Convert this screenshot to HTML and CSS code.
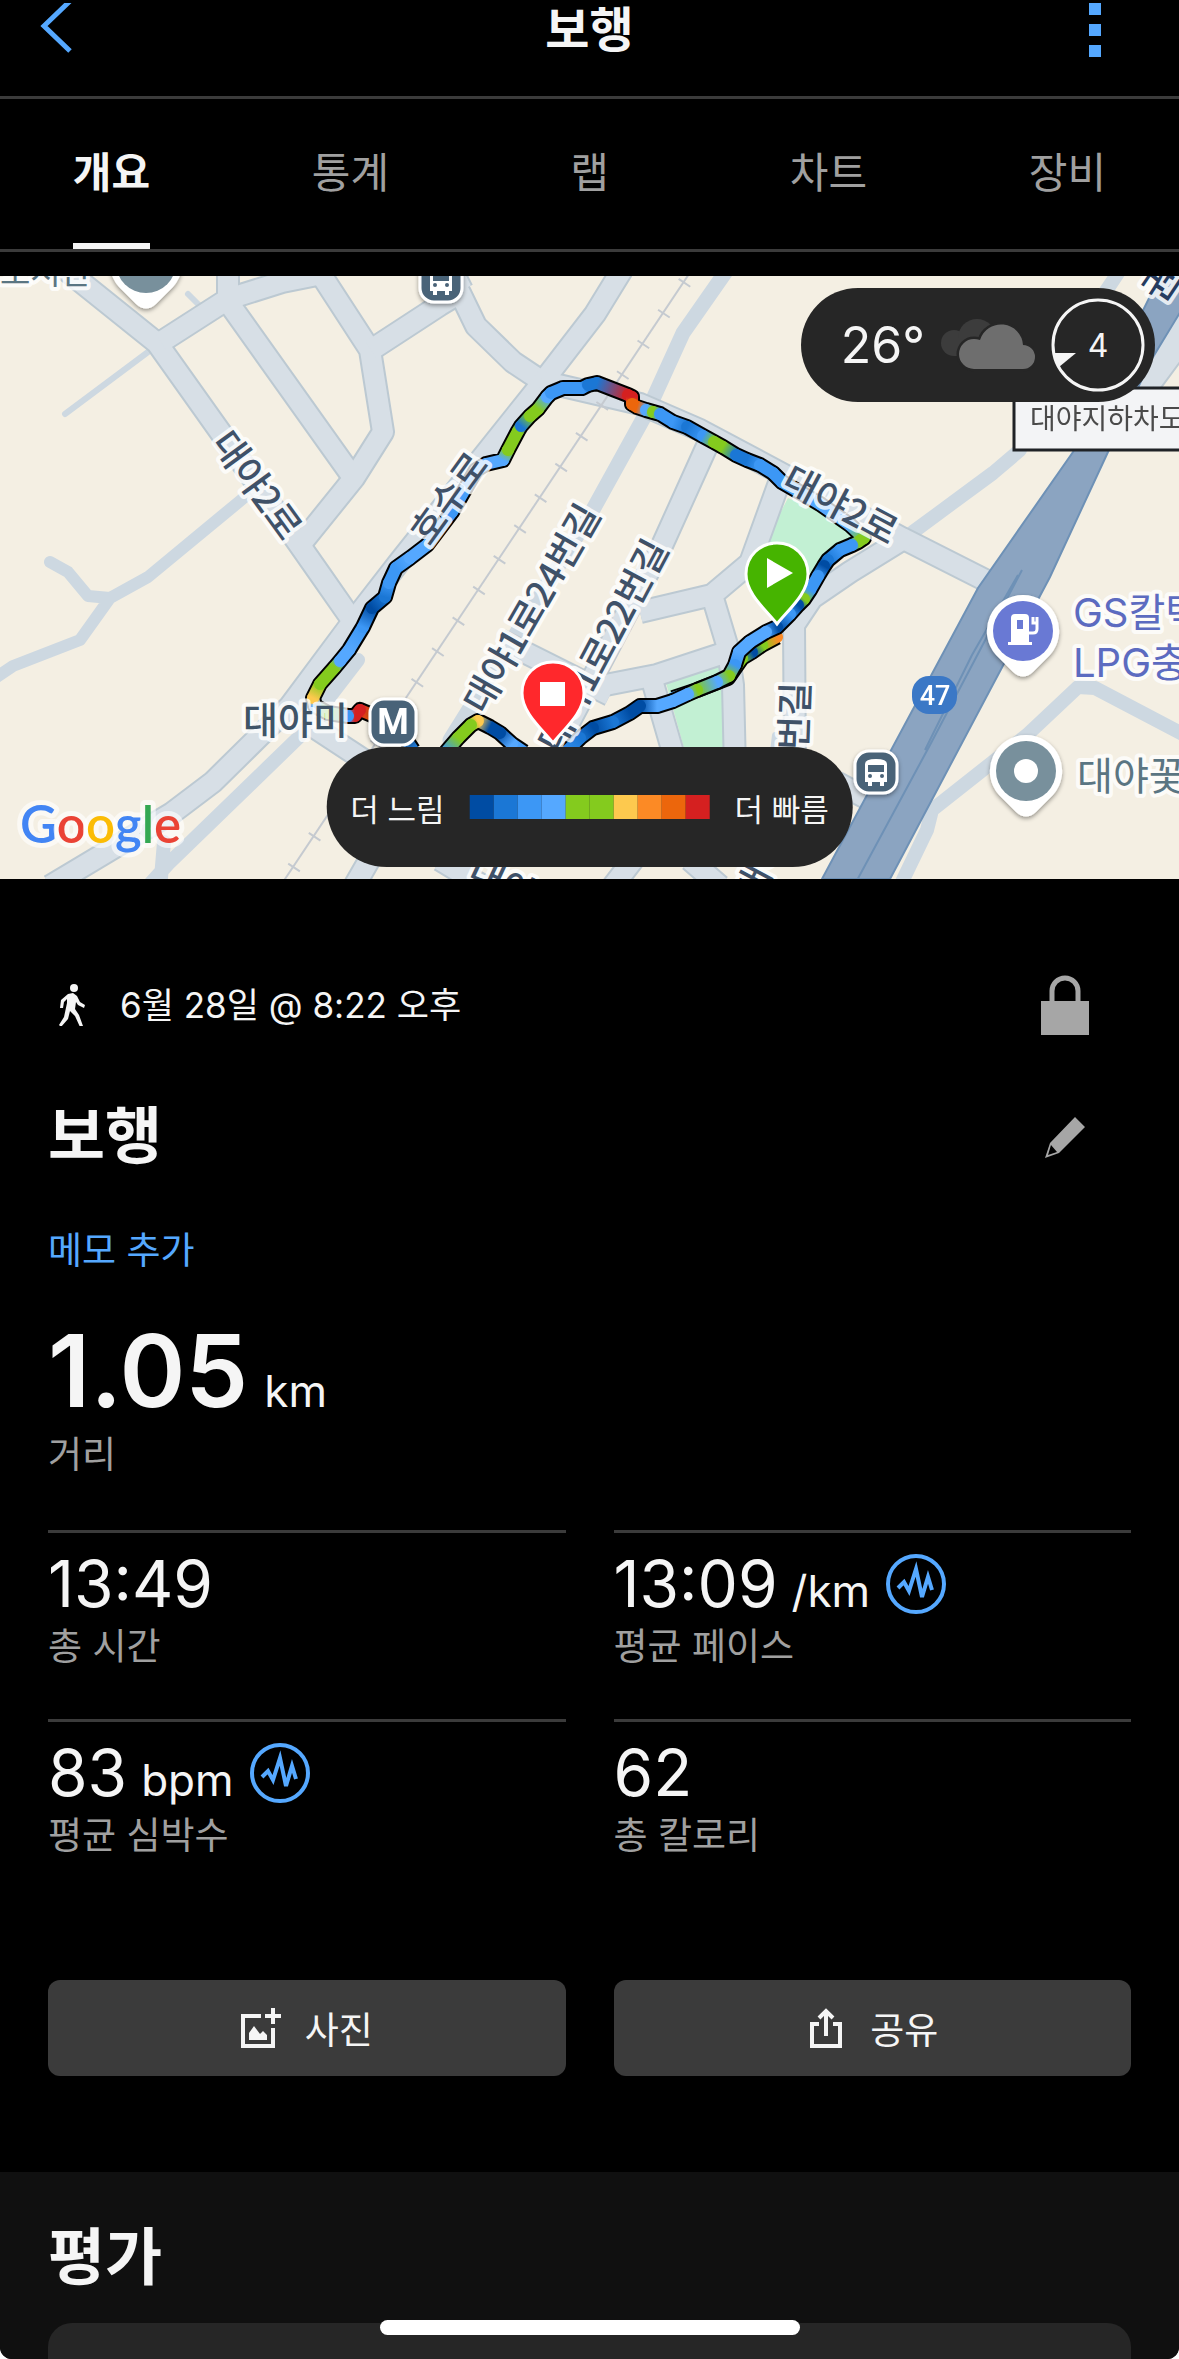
FILE: index.html
```html
<!DOCTYPE html>
<html lang="ko">
<head>
    <meta charset="UTF-8">
    <meta name="viewport" content="width=device-width, initial-scale=1.0">
    <title>보행</title>
    <link rel="stylesheet" href="styles.css">
</head>
<body>
    <div id="app">
        <header class="top-bar">
            <button class="icon-button" type="button" aria-label="뒤로">
                <svg width="40" height="54" viewBox="0 0 40 54"><path d="M34 -2L8 23L34 48" fill="none" stroke="#55a8ff" stroke-width="5"/></svg>
            </button>
            <h1>보행</h1>
            <button class="icon-button" type="button" aria-label="더 보기">
                <svg width="12" height="54" viewBox="0 0 12 54"><path d="M0 0h12v12H0zM0 21h12v12H0zM0 42h12v12H0z" fill="#55a8ff"/></svg>
            </button>
        </header>

        <nav class="tabs">
            <button class="tab active" type="button"><span>개요</span></button>
            <button class="tab" type="button"><span>통계</span></button>
            <button class="tab" type="button"><span>랩</span></button>
            <button class="tab" type="button"><span>차트</span></button>
            <button class="tab" type="button"><span>장비</span></button>
        </nav>

        <section class="map">
            <svg class="map-canvas" viewBox="0 276 1179 603" role="img" aria-label="지도">
                <defs>
                    <filter id="shadow" x="-20%" y="-20%" width="140%" height="150%">
                        <feDropShadow dx="0" dy="2" stdDeviation="2" flood-opacity="0.4"/>
                    </filter>
                    <g id="bus">
                        <rect x="-21" y="-21" width="42" height="42" rx="14" fill="#4a6378" stroke="#fff" stroke-width="3"/>
                        <path d="M-11 -8q0 -5 11 -5t11 5v18h-3v4h-4v-4h-8v4h-4v-4h-3z" fill="#fff"/>
                        <path d="M-8 -7h16v7h-16z" fill="#4a6378"/>
                        <circle cx="-6" cy="4" r="2" fill="#4a6378"/>
                        <circle cx="6" cy="4" r="2" fill="#4a6378"/>
                    </g>
                    <path id="poi" d="M0 -36a36 36 0 0 1 27 60L10 41q-10 9 -20 0L-27 24A36 36 0 0 1 0 -36z" fill="#fff"/>
                    <path id="marker" d="M0 -30c17 0 31 13 31 31C31 21 11 37 0 51C-11 37 -31 21 -31 1C-31 -17 -17 -30 0 -30z" stroke="#fff" stroke-width="3"/>
                    <g id="streets">
                        <path d="M66 270L157 343L221 433L322 577L352 620"/>
                        <path d="M228 268V299L161 342M228 299L282 282L322 274M228 302L352 476"/>
                        <path d="M318 270L370 350L383 432L354 478L300 545"/>
                        <path d="M371 350L440 305L460 293L476 326L513 362L540 380"/>
                        <path d="M462 290L452 270M622 270L595 314L541 384L482 458L400 561L348 628L290 706L213 782L172 813L50 886"/>
                        <path d="M541 381L640 404L700 430L790 478L902 538L985 580"/>
                        <path d="M707 446L660 550L560 740M780 480L750 563L712 595L640 612M712 595L727 645L733 685L735 770"/>
                        <path d="M590 688L657 675L727 652M652 680L678 770M500 640L610 695M905 538L850 572L812 598L794 625L795 770"/>
                        <path d="M312 726L370 764M836 782L866 798M440 860L490 890M610 890L636 856M375 850L352 890M690 860L720 886"/>
                        <path d="M1190 330L1150 384M1190 300L1140 390"/>
                    </g>
                </defs>

                <rect y="276" width="1179" height="603" fill="#f4efe3"/>

                <!-- parks -->
                <path d="M788 498L766 540L775 590L812 572L835 550L865 532z" fill="#c2f0d3"/>
                <path d="M666 683L722 665L726 770L690 770z" fill="#c2f0d3"/>

                <!-- paths -->
                <g class="path">
                    <path d="M65 414L148 352M188 294L204 310" stroke-width="6"/>
                    <path d="M50 562L68 572L88 596L110 598L148 577L246 496M110 598L80 640L13 666L-8 680" stroke-width="12"/>
                    <path d="M358 660L298 738L168 864L150 884M164 842L160 890" stroke-width="14"/>
                    <path d="M727 270L683 333L648 410L590 515L450 740" stroke-width="15"/>
                    <path d="M1020 450L993 473L913 532M1120 270L1100 300" stroke-width="14"/>
                    <path d="M1190 738L1095 688L1078 687L1027 735L932 810L927 830L900 886" stroke-width="14"/>
                    <path d="M775 735L772 760" stroke-width="6"/>
                </g>

                <!-- streets, drawn twice so the outline stays behind every junction -->
                <use href="#streets" class="street-line"/>
                <use href="#streets" class="street-fill"/>

                <!-- railway -->
                <path d="M689 274L283 882" stroke="#c5cad0" stroke-width="2"/>
                <path d="M685 282L283 884" stroke="#c5cad0" stroke-width="14" stroke-dasharray="2 35"/>

                <!-- highway -->
                <path d="M1160 276H1190V296L1150 362L1108 452L1050 577L990 690L890 879H822L978 588L1073 452z" fill="#8ba4c1" stroke="#6e91b6" stroke-width="2"/>
                <path d="M1022 570L980 650L930 745L855 884M1018 575L972 655L925 750" fill="none" stroke="#6e91b6" stroke-width="2"/>

                <g id="route"></g>

                <g class="road-name">
                    <text transform="translate(256 486) rotate(54)" y="12">대야2로</text>
                    <text transform="translate(840 506) rotate(28)" y="12">대야2로</text>
                    <text transform="translate(450 499) rotate(-54)" y="12">호수로</text>
                    <text transform="translate(533 609) rotate(-60)" y="12">대야1로24번길</text>
                    <text transform="translate(604 646) rotate(-62)" y="12">대야1로22번길</text>
                    <text transform="translate(796 716) rotate(-88)" y="12">번길</text>
                    <text transform="translate(762 868) rotate(-62)" y="12">대야</text>
                    <text transform="translate(502 884) rotate(25)" y="12">대야</text>
                    <text transform="translate(1162 284) rotate(-56)" y="12" class="navy">권</text>
                </g>

                <g class="place-name">
                    <text x="0" y="284" font-size="33" fill="#5a7582">도서관</text>
                    <text x="243" y="734" font-size="38" fill="#3f5468" class="strong">대야미</text>
                    <text x="1073" y="627" font-size="40" fill="#5c6bc0">GS칼텍스</text>
                    <text x="1073" y="677" font-size="40" fill="#5c6bc0">LPG충전소</text>
                    <text x="1077" y="790" font-size="39" fill="#5a7582">대야꽃</text>
                </g>

                <g filter="url(#shadow)">
                    <use href="#poi" x="146" y="263"/>
                    <use href="#poi" x="1023" y="631"/>
                    <use href="#poi" x="1026" y="771"/>
                    <use href="#bus" x="441" y="281"/>
                    <use href="#bus" x="876" y="772"/>
                    <rect x="370" y="699" width="46" height="46" rx="14" fill="#4a6378" stroke="#fff" stroke-width="3"/>
                </g>
                <circle cx="146" cy="263" r="30" fill="#78909c"/>
                <circle cx="1023" cy="631" r="30" fill="#6979d4"/>
                <circle cx="1026" cy="771" r="30" fill="#78909c"/>
                <circle cx="1026" cy="771" r="12" fill="#fff"/>
                <path d="M1011 642V618q0 -4 4 -4h10q4 0 4 4v24h3v3h-24v-3zM1017 620v9h6v-9z" fill="#fff" fill-rule="evenodd"/>
                <path d="M1029 633h4q4 0 4 -4v-12M1033 617v6h4" fill="none" stroke="#fff" stroke-width="3"/>
                <text x="393" y="734" class="metro">M</text>

                <rect x="912" y="676" width="45" height="38" rx="17" fill="#3b78c6"/>
                <text x="935" y="705" class="shield">47</text>

                <use href="#marker" x="777" y="573" fill="#46b400"/>
                <path d="M767 558V588L793 573z" fill="#fff"/>
                <use href="#marker" x="553" y="692" fill="#ff282c"/>
                <path d="M540 682h25v24h-25z" fill="#fff"/>

                <rect x="1014" y="388" width="200" height="62" fill="#f3f4f6" stroke="#1f2226" stroke-width="3"/>
                <text x="1030" y="429" class="box-name">대야지하차도</text>

                <text x="20" y="843" class="google"><tspan fill="#4285f4">G</tspan><tspan fill="#ea4335">o</tspan><tspan fill="#fbbc05">o</tspan><tspan fill="#4285f4">g</tspan><tspan fill="#34a853">l</tspan><tspan fill="#ea4335">e</tspan></text>
            </svg>

            <div class="weather">
                <span>26°</span>
                <svg width="94" height="54" viewBox="0 0 94 54">
                    <g fill="#3c3c3c">
                        <circle cx="13" cy="25" r="13"/>
                        <circle cx="36" cy="20" r="19"/>
                        <path d="M13 20h30v18H13z"/>
                    </g>
                    <path d="M33 51a15 15 0 0 1 0 -30q3 0 6 1a22 22 0 0 1 43 5a12 12 0 0 1 0 24z" fill="#6e6e6e" stroke="#262626" stroke-width="5" paint-order="stroke"/>
                </svg>
                <div class="wind">
                    <svg width="94" height="94" viewBox="0 0 94 94">
                        <circle cx="47" cy="47" r="45" fill="none" stroke="#f5f5f5" stroke-width="3"/>
                        <path d="M2 55H25L8 69z" fill="#f5f5f5"/>
                    </svg>
                    <span>4</span>
                </div>
            </div>

            <div class="legend">
                <span>더 느림</span>
                <div class="legend-bar">
                    <i class="c1"></i><i class="c2"></i><i class="c3"></i><i class="c4"></i><i class="c5"></i><i class="c5"></i><i class="c6"></i><i class="c7"></i><i class="c8"></i><i class="c9"></i>
                </div>
                <span>더 빠름</span>
            </div>
        </section>

        <main class="details">
            <div class="row">
                <p class="date">
                    <svg width="48" height="42" viewBox="0 0 48 42">
                        <circle cx="26" cy="4" r="4" fill="#f5f5f5"/>
                        <path d="M20 10l5 -1l4 3l3 6l5 3l-1 3l-6 -3l-2 -3l-1 7l4 6l4 11l-3 1l-5 -11l-5 -5l-2 8l-7 8l-2 -2l5 -8l3 -14v-4l-3 3l-1 6h-3l1 -8z" fill="#f5f5f5"/>
                    </svg>
                    6월 28일 @ 8:22 오후
                </p>
                <button class="icon-button" type="button" aria-label="비공개">
                    <svg width="48" height="60" viewBox="0 0 48 60">
                        <path d="M0 26h48v34H0z" fill="#a6a6a6"/>
                        <path d="M11 28V16a13 13 0 0 1 26 0V28" fill="none" stroke="#a6a6a6" stroke-width="5"/>
                    </svg>
                </button>
            </div>
            <div class="row title-row">
                <h2>보행</h2>
                <button class="icon-button" type="button" aria-label="편집">
                    <svg width="48" height="48" viewBox="0 0 48 48">
                        <path d="M34 4L44 14L18 40L4 45L9 30zM10 32L7 42L16 39z" fill="#a6a6a6" fill-rule="evenodd"/>
                    </svg>
                </button>
            </div>
            <a class="note" href="#">메모 추가</a>

            <div class="distance"><strong>1.05</strong> <span>km</span></div>
            <div class="label">거리</div>

            <div class="stats">
                <div class="stat">
                    <div class="value">13:49</div>
                    <div class="label">총 시간</div>
                </div>
                <div class="stat">
                    <div class="value">13:09 <span>/km</span>
                        <svg width="60" height="60" viewBox="0 0 60 60" class="wave"><circle cx="30" cy="30" r="28"/><path d="M12 34L18 28L23 37L30 15L36 43L42 23L46 36"/></svg>
                    </div>
                    <div class="label">평균 페이스</div>
                </div>
                <div class="stat">
                    <div class="value">83 <span>bpm</span>
                        <svg width="60" height="60" viewBox="0 0 60 60" class="wave"><circle cx="30" cy="30" r="28"/><path d="M12 34L18 28L23 37L30 15L36 43L42 23L46 36"/></svg>
                    </div>
                    <div class="label">평균 심박수</div>
                </div>
                <div class="stat">
                    <div class="value">62</div>
                    <div class="label">총 칼로리</div>
                </div>
            </div>

            <div class="actions">
                <button type="button">
                    <svg width="40" height="40" viewBox="0 0 40 40" fill="#f5f5f5">
                        <path d="M0 6H20V10H4V36H30V20H34V40H0z"/>
                        <path d="M30 0h4v6h6v4h-6v6h-4v-6h-6v-4h6zM8 32V25l5 -7l6 8l3 -3l4 4v5z"/>
                    </svg>
                    사진
                </button>
                <button type="button">
                    <svg width="40" height="40" viewBox="0 0 40 40">
                        <path d="M13 16H6V38H34V16H27M20 28V3M13 10L20 3L27 10" fill="none" stroke="#f5f5f5" stroke-width="4"/>
                    </svg>
                    공유
                </button>
            </div>
        </main>

        <section class="rating">
            <h2>평가</h2>
            <div class="card"></div>
        </section>
        <div class="home-bar"></div>
    </div>

    <script>
        const colors = ['#004ca3', '#1b77d5', '#3c97f5', '#55a8ff', '#84cb1e', '#fdc94e', '#fc8a25', '#ec660c', '#d52020'];

        // x, y, colour index
        const tracks = [
            [
                [777, 637, 6], [762, 645, 4], [752, 652, 0], [742, 658, 4], [728, 678, 4], [697, 690, 4], [673, 698, 3]
            ],
            [
                [413, 750, 1], [403, 735, 2], [390, 722, 6], [372, 715, 7], [360, 710, 8], [355, 716, 8], [348, 716, 2],
                [328, 713, 4], [315, 706, 3], [313, 698, 5], [320, 684, 4], [335, 667, 4], [340, 661, 3], [349, 650, 3],
                [363, 627, 2], [372, 608, 0], [385, 597, 1], [389, 583, 2], [396, 568, 2], [410, 558, 3], [427, 545, 3],
                [452, 512, 2], [476, 470, 3], [486, 464, 3], [503, 460, 3], [508, 450, 4], [518, 431, 4], [521, 426, 1],
                [530, 416, 4], [538, 409, 4], [547, 397, 3], [551, 393, 2], [563, 388, 2], [582, 388, 2], [588, 385, 1],
                [597, 383, 1], [628, 395, 8], [632, 397, 8], [632, 404, 7], [637, 407, 7], [646, 410, 3], [653, 412, 4],
                [660, 414, 2], [673, 422, 2], [687, 427, 1], [703, 436, 2], [714, 442, 4], [723, 447, 4], [736, 455, 1],
                [747, 460, 1], [760, 465, 2], [773, 473, 2], [782, 482, 2], [820, 504, 3], [850, 525, 3],
                [864, 538, 4], [858, 542, 4], [852, 545, 2], [840, 550, 2], [828, 560, 1], [824, 566, 0], [818, 576, 2],
                [810, 590, 2], [804, 599, 4], [798, 605, 0], [790, 614, 2], [777, 627, 0], [766, 632, 3], [750, 642, 3],
                [739, 652, 3], [735, 665, 2], [729, 676, 4], [717, 682, 3], [697, 690, 4], [688, 694, 3], [673, 701, 3],
                [657, 706, 3], [640, 706, 0], [630, 713, 0], [613, 722, 1], [593, 728, 0], [580, 738, 1], [560, 758, 2]
            ],
            [
                [524, 752, 2], [512, 744, 3], [500, 733, 0], [490, 727, 0], [478, 721, 5], [471, 725, 4], [458, 738, 4], [446, 752, 2]
            ]
        ];

        const ns = 'http://www.w3.org/2000/svg';
        const route = document.getElementById('route');

        function add(name, attrs, parent) {
            const el = document.createElementNS(ns, name);
            for (const key in attrs) el.setAttribute(key, attrs[key]);
            parent.appendChild(el);
            return el;
        }

        tracks.forEach((track, t) => {
            add('polyline', { points: track.map(p => p[0] + ',' + p[1]).join(' '), class: 'casing' }, route);
            for (let i = 1; i < track.length; i++) {
                const [x1, y1, c1] = track[i - 1];
                const [x2, y2, c2] = track[i];
                const id = 'g' + t + '-' + i;
                const gradient = add('linearGradient', { id, gradientUnits: 'userSpaceOnUse', x1, y1, x2, y2 }, route);
                add('stop', { offset: 0, 'stop-color': colors[c1] }, gradient);
                add('stop', { offset: 1, 'stop-color': colors[c2] }, gradient);
                add('path', { d: `M${x1} ${y1}L${x2} ${y2}`, class: 'pace', stroke: `url(#${id})` }, route);
            }
        });
    </script>
</body>
</html>
```
FILE: styles.css
```css
* {
    box-sizing: border-box;
}

body {
    margin: 0;
    background: #fff;
    color: #f5f5f5;
    font-family: Inter, "Noto Sans CJK KR", sans-serif;
    font-size: 37px;
}

h1, h2, p {
    margin: 0;
}

button {
    padding: 0;
    border: none;
    background: none;
    color: inherit;
    font: inherit;
    cursor: pointer;
}

svg {
    display: block;
    flex-shrink: 0;
}

#app {
    position: relative;
    display: flex;
    flex-direction: column;
    min-height: 100vh;
    background: #000;
    border-radius: 0 0 12px 12px;
    overflow: hidden;
}

.top-bar {
    display: grid;
    grid-template-columns: 1fr auto 1fr;
    align-items: center;
    padding: 0 78px 36px 36px;
    border-bottom: 3px solid #3b3b3b;
}

.top-bar h1 {
    padding-left: 42px;
    font-size: 48px;
    font-weight: 600;
    line-height: 60px;
}

.top-bar .icon-button:last-child {
    justify-self: end;
}

.tabs {
    display: grid;
    grid-template-columns: repeat(5, 1fr);
    margin: 0 -8px;
    border-bottom: 3px solid #3b3b3b;
}

.tab {
    color: #a0a0a0;
    font-size: 42px;
    line-height: 140px;
}

.tab span {
    display: inline-block;
    padding-top: 4px;
    border-bottom: 6px solid transparent;
}

.tab.active {
    color: #f5f5f5;
    font-weight: 600;
}

.tab.active span {
    border-color: #f5f5f5;
}

.map {
    position: relative;
    margin-top: 24px;
}

.map-canvas {
    width: 100%;
    height: auto;
}

.path {
    fill: none;
    stroke: #cdd8e1;
    stroke-linecap: round;
    stroke-linejoin: round;
}

.street-line, .street-fill {
    fill: none;
    stroke-linejoin: round;
}

.street-line {
    stroke: #bcc9d2;
    stroke-width: 24px;
}

.street-fill {
    stroke: #d7dfe6;
    stroke-width: 20px;
}

.casing, .pace {
    fill: none;
    stroke-linejoin: round;
}

.casing {
    stroke: #000;
    stroke-width: 16px;
}

.pace {
    stroke-width: 12px;
    stroke-linecap: round;
}

.road-name text {
    font: 500 37px "Noto Sans CJK KR", sans-serif;
    text-anchor: middle;
    fill: #3f5168;
}

.road-name .navy {
    fill: #263c60;
}

.road-name text, .place-name text {
    paint-order: stroke;
    stroke: rgba(255, 255, 255, 0.8);
    stroke-width: 8px;
    stroke-linejoin: round;
}

.place-name .strong {
    font-weight: 500;
}

.metro {
    font: 700 36px Roboto, sans-serif;
    fill: #fff;
    text-anchor: middle;
}

.shield {
    font: 500 27px Roboto, sans-serif;
    fill: #fff;
    text-anchor: middle;
}

.box-name {
    font-size: 28px;
    fill: #4a4a4a;
}

.google {
    font: 600 51px Lato, sans-serif;
    paint-order: stroke;
    stroke: rgba(255, 255, 255, 0.6);
    stroke-width: 10px;
    stroke-linejoin: round;
}

.weather, .legend {
    position: absolute;
    display: flex;
    align-items: center;
    background: #262626;
    border-radius: 60px;
}

.weather {
    top: 12px;
    right: 24px;
    gap: 16px;
    height: 114px;
    padding: 0 10px 0 40px;
    font-size: 50px;
}

.wind {
    display: grid;
    place-items: center;
    font-size: 32px;
}

.wind svg, .wind span {
    grid-area: 1 / 1;
}

.legend {
    bottom: 12px;
    left: 50%;
    transform: translateX(-50%);
    gap: 25px;
    height: 120px;
    padding: 0 24px;
    font-size: 31px;
    white-space: nowrap;
}

.legend-bar {
    display: flex;
}

.legend-bar i {
    width: 24px;
    height: 24px;
}

.c1 { background: #004ca3; }
.c2 { background: #1b77d5; }
.c3 { background: #3c97f5; }
.c4 { background: #55a8ff; }
.c5 { background: #84cb1e; }
.c6 { background: #fdc94e; }
.c7 { background: #fc8a25; }
.c8 { background: #ec660c; }
.c9 { background: #d52020; }

.details {
    padding: 96px 48px;
}

.row {
    display: flex;
    justify-content: space-between;
    align-items: center;
    padding-right: 42px;
}

.date {
    display: flex;
    align-items: center;
    gap: 24px;
    font-size: 35px;
    line-height: 60px;
}

.title-row {
    margin-top: 66px;
}

h2 {
    font-size: 62px;
    font-weight: 600;
    line-height: 72px;
}

.note {
    display: block;
    margin-top: 54px;
    color: #55a8ff;
    line-height: 48px;
    text-decoration: none;
}

.distance {
    display: flex;
    align-items: baseline;
    gap: 16px;
    margin-top: 48px;
    font-size: 44px;
    line-height: 48px;
}

.distance strong {
    font-size: 100px;
    font-weight: 600;
    line-height: 96px;
}

.label {
    color: #a0a0a0;
    line-height: 48px;
}

.distance + .label {
    margin-top: 12px;
}

.stats {
    display: grid;
    grid-template-columns: 1fr 1fr;
    gap: 48px;
    margin-top: 51px;
}

.stat {
    padding-top: 15px;
    border-top: 3px solid #3b3b3b;
}

.value {
    display: flex;
    align-items: baseline;
    gap: 14px;
    margin-bottom: 3px;
    font-size: 64px;
    line-height: 72px;
}

.value span {
    font-size: 44px;
    line-height: 48px;
}

.wave {
    align-self: center;
    margin-left: 2px;
    fill: none;
    stroke: #55a8ff;
    stroke-width: 4px;
}

.actions {
    display: grid;
    grid-template-columns: 1fr 1fr;
    gap: 48px;
    margin-top: 120px;
}

.actions button {
    display: flex;
    justify-content: center;
    align-items: center;
    gap: 24px;
    height: 96px;
    background: #3b3b3b;
    border-radius: 12px;
}

.rating {
    flex: 1;
    display: flex;
    flex-direction: column;
    padding: 50px 48px 0;
    background: #101010;
}

.card {
    flex: 1;
    min-height: 36px;
    margin-top: 29px;
    background: #262626;
    border-radius: 24px 24px 0 0;
}

.home-bar {
    position: absolute;
    bottom: 24px;
    left: 50%;
    width: 420px;
    height: 15px;
    margin-left: -210px;
    background: #fff;
    border-radius: 8px;
}
```
